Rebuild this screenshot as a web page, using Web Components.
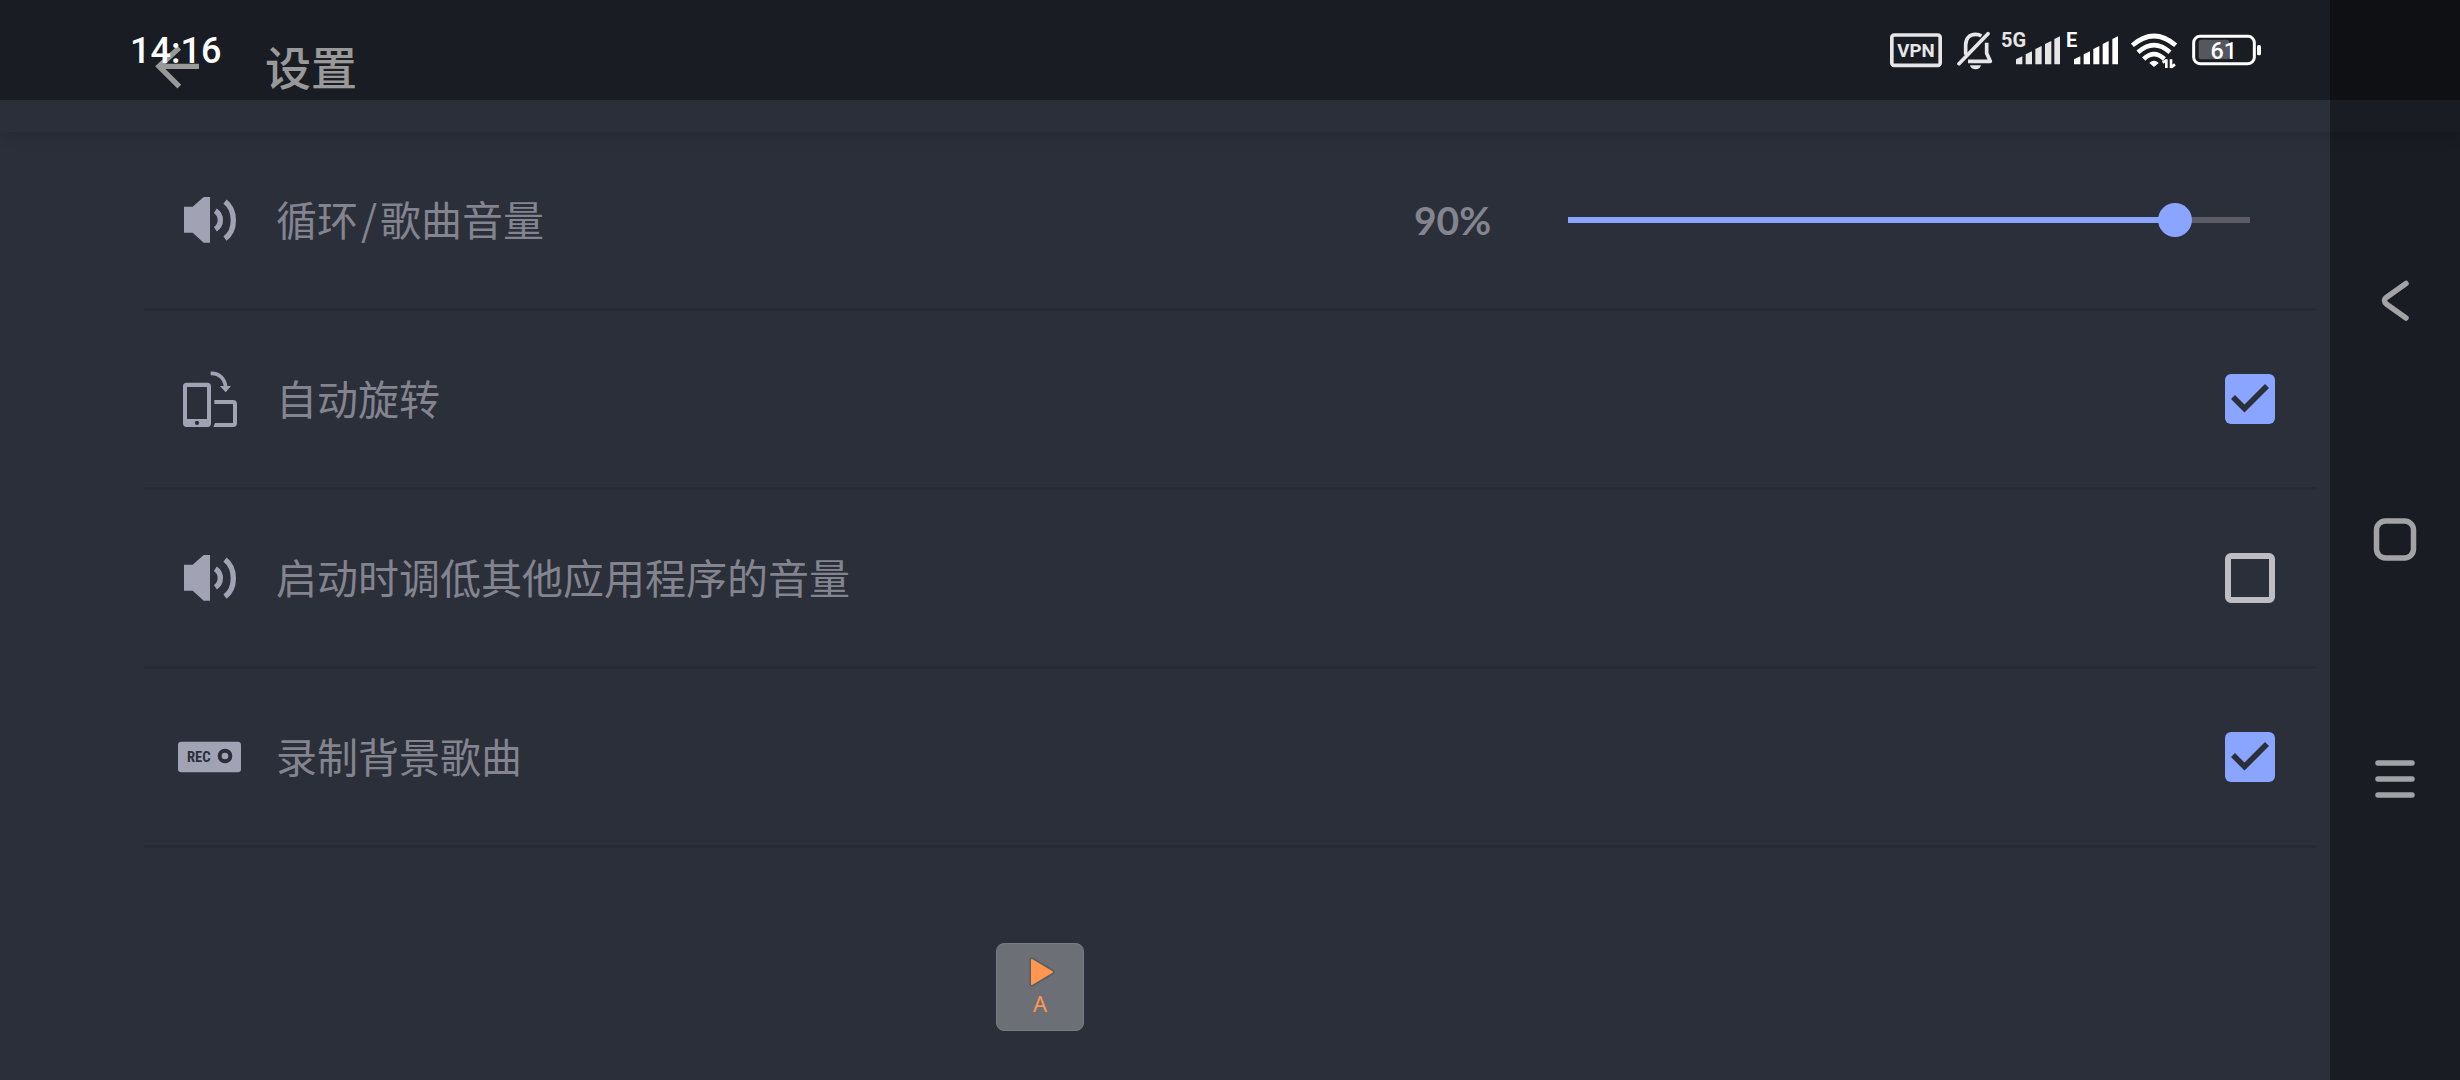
<!DOCTYPE html>
<html lang="zh-CN">
<head>
<meta charset="utf-8">
<meta name="viewport" content="width=device-width, initial-scale=1">
<title>设置</title>
<style>
  html, body { margin: 0; height: 100%; }
  body {
    background: #2b2f3a;
    color: #83848f;
    font-family: "Noto Sans CJK SC", sans-serif;
  }
</style>
</head>
<body>
<settings-screen></settings-screen>

<template id="settings-screen">
  <style>
    :host {
      --page: #2b2f3a;
      --divider: #272934;
      --accent: #8aa5ff;
      --scrim: rgba(0, 0, 0, .4);
      --icon: #a1a2b3;
      --nav-width: 130px;
      display: grid;
      grid-template-columns: 1fr var(--nav-width);
      grid-template-rows: auto 1fr;
      min-height: 100vh;
      position: relative;
      overflow: hidden;
      background: var(--page);
    }
    app-bar { grid-column: 1 / -1; grid-row: 1; }
    main { grid-column: 1; grid-row: 2; padding: 0 14px 0 144px; }
    nav-bar { grid-column: 2; grid-row: 1 / -1; z-index: 1; }
    status-bar { position: absolute; inset: 0 0 auto 0; z-index: 2; pointer-events: none; }
    play-bubble { position: absolute; left: 996px; bottom: 49px; z-index: 1; }
    .slash { padding: 0 3px; }
  </style>
  <app-bar>设置</app-bar>
  <main>
    <volume-row value="91" readout="90%">
      <row-icon slot="icon" name="speaker"></row-icon>循环<span class="slash">/</span>歌曲音量
    </volume-row>
    <check-row checked><row-icon slot="icon" name="rotate"></row-icon>自动旋转</check-row>
    <check-row><row-icon slot="icon" name="speaker"></row-icon>启动时调低其他应用程序的音量</check-row>
    <check-row checked><row-icon slot="icon" name="record"></row-icon>录制背景歌曲</check-row>
  </main>
  <nav-bar></nav-bar>
  <status-bar></status-bar>
  <play-bubble>A</play-bubble>
</template>

<template id="app-bar">
  <style>
    :host {
      display: flex; align-items: center; gap: 66px;
      box-sizing: border-box; height: 132px; padding: 2px 0 0 155px;
      color: #fff; box-shadow: 0 0 18px rgba(0, 0, 0, .2);
      background: var(--page);
    }
    button { display: flex; padding: 0; border: 0; background: none; color: inherit; }
    svg { width: 44px; height: 44px; }
    h1 { margin: 0; padding-bottom: 4px; font-size: 46px; font-weight: 500; line-height: 60px; }
  </style>
  <button type="button" aria-label="返回">
    <svg viewBox="165 134 132 132" fill="none" stroke="currentColor" stroke-width="16"><path d="M297 198H176M238 142L177 198L238 259"/></svg>
  </button>
  <h1><slot></slot></h1>
</template>

<template id="status-bar">
  <style>
    :host {
      display: flex; align-items: center; justify-content: space-between;
      box-sizing: border-box; height: 100px;
      padding: 0 199px 0 130px;
      background: var(--scrim); color: #fff;
      font-family: Roboto, sans-serif;
    }
    time { padding-top: 2px; font-size: 36px; font-weight: 500; line-height: 44px; }
    div { display: flex; gap: 6px; }
    svg { height: 48px; display: block; }
    text { font-family: Roboto, sans-serif; font-weight: 700; fill: currentColor; stroke: none; }
    .dim { color: #e6e6e8; }
  </style>
  <time>14:16</time>
  <div>
    <svg class="dim" width="61" viewBox="60 48 183 144" fill="none" stroke="currentColor" stroke-width="11">
      <rect x="65.500" y="75" width="145" height="91" rx="7"/>
      <text x="138" y="140" font-size="56" text-anchor="middle">VPN</text>
    </svg>
    <svg class="dim" width="38" viewBox="261 48 114 144" fill="none" stroke="currentColor" stroke-width="11" stroke-linejoin="round">
      <path d="M267 161L354 71" stroke-linecap="round"/>
      <path d="M287 134V106C287 86 297 73 317 73Q327 73 334 78M350 98V130L361 154H294"/>
      <path d="M300 166H333Q330 178 317 178Q303 178 300 166Z" fill="currentColor" stroke="none"/>
    </svg>
    <svg class="dim" width="59" viewBox="393 48 177 144" fill="currentColor">
      <text x="393" y="112" font-size="60">5G</text>
      <path d="M438 163V148L457 139V163ZM467 163V133L486 124V163ZM496 163V117L515 108V163ZM525 163V102L544 93V163ZM553 163V87L570 79V163Z"/>
    </svg>
    <svg width="59" viewBox="588 48 177 144" fill="currentColor">
      <text x="588" y="111" font-size="60">E</text>
      <path d="M612 163V148L631 139V163ZM641 163V133L660 124V163ZM670 163V117L688 108V163ZM698 163V102L716 93V163ZM727 163V87L744 79V163Z"/>
    </svg>
    <svg width="55" viewBox="783 48 165 144" fill="none" stroke="currentColor" stroke-width="14">
      <path d="M787 106Q852 50 917 106M804 127Q852 84 900 127M821 147Q852 118 883 147"/>
      <path d="M838 159Q852 145 866 159L852 171Z" fill="currentColor" stroke="none"/>
      <path d="M878 158L889 150M889 148V174M903 148V174M903 172L915 163" stroke-width="8"/>
    </svg>
    <svg width="69" viewBox="966 48 207 144">
      <rect x="986" y="89" width="92" height="59" rx="8" fill="#55575d"/>
      <rect x="971" y="79" width="182" height="82" rx="19" fill="none" stroke="currentColor" stroke-width="9"/>
      <rect x="1161" y="105" width="12" height="31" rx="5" fill="currentColor"/>
      <text x="1061" y="146" font-size="70" style="font-weight:500" text-anchor="middle">61</text>
    </svg>
  </div>
</template>

<template id="nav-bar">
  <style>
    :host { display: flex; flex-direction: column; justify-content: center; background: var(--scrim); color: #a3a3a5; }
    button {
      display: flex; align-items: center; justify-content: center;
      height: 239px; padding: 0; border: 0; background: none; color: inherit;
    }
    svg { width: 48px; height: 48px; fill: none; stroke: currentColor; stroke-width: 5.500; stroke-linecap: round; stroke-linejoin: round; }
  </style>
  <button type="button" aria-label="后退"><svg viewBox="0 0 48 48"><path d="M35 6.500L16 20Q11 23.500 16 27.500L35 41"/></svg></button>
  <button type="button" aria-label="主页"><svg viewBox="0 0 48 48"><rect x="5.500" y="5" width="37" height="37" rx="9"/></svg></button>
  <button type="button" aria-label="最近任务"><svg viewBox="0 0 48 48"><path d="M7 8H41M7 24H41M7 40H41"/></svg></button>
</template>

<template id="check-row">
  <style>
    :host { display: block; border-bottom: 3px solid var(--divider); }
    label { display: flex; align-items: center; gap: 34px; height: 176px; padding: 0 41px 0 34px; }
    span { flex: 1; padding-bottom: 4px; font-size: 41px; line-height: 60px; }
    input {
      appearance: none; box-sizing: border-box; flex: none;
      width: 50px; height: 50px; margin: 0;
      border: 6px solid #bdbdc2; border-radius: 6px;
      display: grid; place-items: center;
    }
    input:checked { border: 0; background: var(--accent); }
    input:checked::before {
      content: ""; width: 50px; height: 50px; background: var(--page);
      clip-path: polygon(6px 25px, 10px 21px, 19.500px 30.500px, 40px 10px, 44px 14px, 19.500px 38.500px);
    }
  </style>
  <label><slot name="icon"></slot><span><slot></slot></span><input type="checkbox"></label>
</template>

<template id="volume-row">
  <style>
    :host {
      display: flex; align-items: center; box-sizing: border-box; height: 179px;
      padding: 0 66px 0 34px; border-bottom: 3px solid var(--divider);
    }
    label { flex: 1; display: flex; align-items: center; gap: 34px; font-size: 41px; line-height: 60px; }
    span { padding-bottom: 4px; }
    output { width: 154px; font: 700 39px/60px Lato, sans-serif; }
    input {
      --at: calc(17px + (100% - 34px) * var(--ratio));
      appearance: none; flex: 0 1 682px; min-width: 0; height: 34px; margin: 0;
      background: linear-gradient(to right, var(--accent) var(--at), #5b5c66 var(--at)) center / 100% 6px no-repeat;
    }
    input::-webkit-slider-thumb { appearance: none; width: 34px; height: 34px; border-radius: 50%; background: var(--accent); }
  </style>
  <label for="level"><slot name="icon"></slot><span><slot></slot></span></label>
  <output for="level"></output>
  <input id="level" type="range" min="0" max="100">
</template>

<template id="row-icon">
  <style>
    :host { display: block; flex: none; width: 64px; height: 64px; color: var(--icon); }
    svg { display: block; width: 64px; height: 64px; }
    text { font: 700 44px "Liberation Sans Narrow", "Roboto Condensed", Roboto, sans-serif; fill: var(--page); }
    circle { stroke: var(--page); }
  </style>
</template>

<template id="play-bubble">
  <style>
    :host { display: block; width: 88px; height: 88px; }
    button {
      display: flex; flex-direction: column; align-items: center; gap: 2px;
      box-sizing: border-box; width: 100%; height: 100%; padding: 0 0 2px; justify-content: center;
      border: 1px solid #777a80; border-radius: 8px;
      background: #6c6f76; color: #ff9752; font: 22px/26px "Noto Sans", sans-serif;
    }
    svg { width: 30px; height: 32px; }
  </style>
  <button type="button">
    <svg viewBox="0 0 30 32"><path d="M7 4L27 16L7 28Z" fill="none" stroke="#5f5c5c" stroke-width="5" stroke-linejoin="round"/><path d="M7 4L27 16L7 28Z" fill="currentColor" stroke="currentColor" stroke-width="2" stroke-linejoin="round"/></svg>
    <slot></slot>
  </button>
</template>

<script>
  class TemplateElement extends HTMLElement {
    constructor() {
      super();
      const root = this.attachShadow({ mode: "open" });
      root.append(document.getElementById(this.localName).content.cloneNode(true));
    }
  }

  class CheckRow extends TemplateElement {
    connectedCallback() {
      this.shadowRoot.querySelector("input").checked = this.hasAttribute("checked");
    }
  }

  class VolumeRow extends TemplateElement {
    connectedCallback() {
      const input = this.shadowRoot.querySelector("input");
      const output = this.shadowRoot.querySelector("output");
      const paint = () => input.style.setProperty("--ratio", input.value / 100);
      input.value = this.getAttribute("value");
      output.textContent = this.getAttribute("readout");
      paint();
      input.addEventListener("input", () => {
        output.textContent = input.value + "%";
        paint();
      });
    }
  }

  const ICONS = {
    speaker: `<svg viewBox="54 54 192 192">
      <path fill="currentColor" d="M72 110H98L131 81H150V218H131L98 188H72Z"/>
      <path fill="none" stroke="currentColor" stroke-width="16" d="M166 122Q181 132 181 150T166 178M195 95Q220 114 220 151T195 206"/></svg>`,
    rotate: `<svg viewBox="54 51 192 192">
      <path fill="currentColor" fill-rule="evenodd" d="M80 98H142Q153 98 153 109V220Q153 231 142 231H80Q69 231 69 220V109Q69 98 80 98ZM81 111V207H141V111ZM111 212A6.500 6.500 0 1 0 111 225A6.500 6.500 0 1 0 111 212Z"/>
      <path fill="currentColor" d="M163 150H219Q231 150 231 162V219Q231 231 219 231H160L165 219H219V162H163Z"/>
      <path fill="none" stroke="currentColor" stroke-width="11" d="M152 70C180 69 195 88 197 112"/>
      <path fill="currentColor" d="M180 108H213L197 127Z"/></svg>`,
    record: `<svg viewBox="54 46 192 192">
      <rect x="54" y="96" width="189" height="92" rx="10" fill="currentColor"/>
      <text x="81" y="157">REC</text>
      <circle cx="195" cy="139" r="16" fill="none" stroke-width="12"/></svg>`
  };

  class RowIcon extends TemplateElement {
    connectedCallback() {
      this.shadowRoot.querySelector("style").insertAdjacentHTML("afterend", ICONS[this.getAttribute("name")]);
    }
  }

  customElements.define("row-icon", RowIcon);
  customElements.define("check-row", CheckRow);
  customElements.define("volume-row", VolumeRow);
  for (const name of ["app-bar", "status-bar", "nav-bar", "play-bubble", "settings-screen"]) {
    customElements.define(name, class extends TemplateElement {});
  }
</script>
</body>
</html>
